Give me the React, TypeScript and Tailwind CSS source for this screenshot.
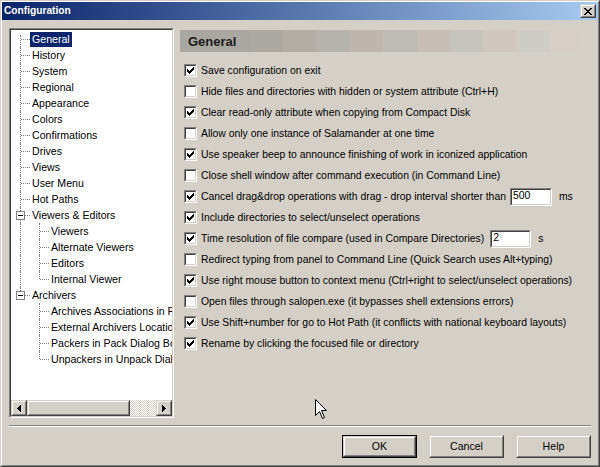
import React from "react";

type Node = {
  label: string;
  level: 0 | 1;
  selected?: boolean;
  first?: boolean;
  last?: boolean;
  expander?: boolean;
  parentLine?: boolean;
};

const TREE: Node[] = [
  { label: "General", level: 0, selected: true, first: true },
  { label: "History", level: 0 },
  { label: "System", level: 0 },
  { label: "Regional", level: 0 },
  { label: "Appearance", level: 0 },
  { label: "Colors", level: 0 },
  { label: "Confirmations", level: 0 },
  { label: "Drives", level: 0 },
  { label: "Views", level: 0 },
  { label: "User Menu", level: 0 },
  { label: "Hot Paths", level: 0 },
  { label: "Viewers & Editors", level: 0, expander: true },
  { label: "Viewers", level: 1, parentLine: true },
  { label: "Alternate Viewers", level: 1, parentLine: true },
  { label: "Editors", level: 1, parentLine: true },
  { label: "Internal Viewer", level: 1, parentLine: true, last: true },
  { label: "Archivers", level: 0, expander: true, last: true },
  { label: "Archives Associations in Panels", level: 1 },
  { label: "External Archivers Locations", level: 1 },
  { label: "Packers in Pack Dialog Box", level: 1 },
  { label: "Unpackers in Unpack Dialog Box", level: 1, last: true },
];

const OPTIONS: { label: string; checked: boolean; input?: string; unit?: string }[] = [
  { label: "Save configuration on exit", checked: true },
  { label: "Hide files and directories with hidden or system attribute (Ctrl+H)", checked: false },
  { label: "Clear read-only attribute when copying from Compact Disk", checked: true },
  { label: "Allow only one instance of Salamander at one time", checked: false },
  { label: "Use speaker beep to announce finishing of work in iconized application", checked: true },
  { label: "Close shell window after command execution (in Command Line)", checked: false },
  { label: "Cancel drag&drop operations with drag - drop interval shorter than", checked: true, input: "500", unit: "ms" },
  { label: "Include directories to select/unselect operations", checked: true },
  { label: "Time resolution of file compare (used in Compare Directories)", checked: true, input: "2", unit: "s" },
  { label: "Redirect typing from panel to Command Line (Quick Search uses Alt+typing)", checked: false },
  { label: "Use right mouse button to context menu (Ctrl+right to select/unselect operations)", checked: true },
  { label: "Open files through salopen.exe (it bypasses shell extensions errors)", checked: false },
  { label: "Use Shift+number for go to Hot Path (it conflicts with national keyboard layouts)", checked: true },
  { label: "Rename by clicking the focused file or directory", checked: true },
];

function CheckMark() {
  return (
    <svg width="7" height="7" viewBox="0 0 7 7" shapeRendering="crispEdges">
      <path
        d="M6 0h1v1h-1z M5 1h2v1h-2z M0 2h1v1h-1z M4 2h3v1h-3z M0 3h2v1h-2z M3 3h3v1h-3z M0 4h5v1h-5z M1 5h3v1h-3z M2 6h1v1h-1z"
        fill="#000"
      />
    </svg>
  );
}

function CheckBox({ checked }: { checked: boolean }) {
  return (
    <div className="w-[13px] h-[13px] shrink-0 border border-t-[#808080] border-l-[#808080] border-b-white border-r-white">
      <div className="w-full h-full border border-t-[#404040] border-l-[#404040] border-b-[#d4d0c8] border-r-[#d4d0c8] bg-white flex items-center justify-center">
        {checked && <CheckMark />}
      </div>
    </div>
  );
}

function Edit({ value, w }: { value: string; w: string }) {
  return (
    <div className={`${w} h-[18px] shrink-0 border border-t-[#808080] border-l-[#808080] border-b-white border-r-white`}>
      <div className="w-full h-full border border-t-[#404040] border-l-[#404040] border-b-[#d4d0c8] border-r-[#d4d0c8] bg-white flex items-center pl-[1px] leading-none">
        {value}
      </div>
    </div>
  );
}

function Raised({ className, children }: { className: string; children?: React.ReactNode }) {
  return (
    <div className={`${className} shrink-0 border border-t-[#d4d0c8] border-l-[#d4d0c8] border-b-[#404040] border-r-[#404040]`}>
      <div className="w-full h-full border border-t-white border-l-white border-b-[#808080] border-r-[#808080] bg-[#d4d0c8] flex items-center justify-center">
        {children}
      </div>
    </div>
  );
}

function TreeRow({ n }: { n: Node }) {
  return (
    <div className="relative h-[16px] flex items-center whitespace-nowrap">
      {n.level === 0 && (
        <div
          className={`absolute left-[9px] border-l border-dotted border-[#808080] ${n.first ? "top-[4px]" : "top-0"} ${
            n.last ? "h-[8px]" : "bottom-0"
          }`}
        />
      )}
      {n.level === 1 && n.parentLine && (
        <div className="absolute left-[9px] top-0 bottom-0 border-l border-dotted border-[#808080]" />
      )}
      {n.level === 0 && (
        <div className="absolute left-[10px] top-[8px] w-[9px] border-t border-dotted border-[#808080]" />
      )}
      {n.level === 1 && (
        <>
          <div className={`absolute left-[28px] top-0 border-l border-dotted border-[#808080] ${n.last ? "h-[8px]" : "bottom-0"}`} />
          <div className="absolute left-[29px] top-[8px] w-[9px] border-t border-dotted border-[#808080]" />
        </>
      )}
      {n.expander && (
        <div className="absolute left-[5px] top-[4px] w-[9px] h-[9px] border border-[#808080] bg-white flex items-center justify-center">
          <div className="w-[5px] h-[1px] bg-black" />
        </div>
      )}
      <span
        className={`${n.level === 0 ? "ml-[19px]" : "ml-[38px]"} h-[15px] leading-[15px] px-[2px] ${
          n.selected ? "bg-[#0a246a] text-white" : "text-black"
        }`}
      >
        {n.label}
      </span>
    </div>
  );
}

export default function App() {
  return (
    <div className="relative w-[600px] h-[467px] overflow-hidden bg-[#d4d0c8] text-[10.6px] text-black font-['Liberation_Sans',Arial,sans-serif] border border-t-[#d4d0c8] border-l-[#d4d0c8] border-r-[#404040] border-b-[#404040]">
      <div className="h-full flex flex-col border border-t-white border-l-white border-r-[#808080] border-b-[#808080]">
        {/* Title bar */}
        <div className="h-[18px] shrink-0 flex items-center justify-between pl-[2px] pr-[2px] bg-[linear-gradient(to_right,#0a246a,#a6caf0)]">
          <span className="text-white font-bold text-[10.2px] leading-none">Configuration</span>
          <Raised className="w-[16px] h-[14px]">
            <svg width="8" height="7" viewBox="0 0 8 7" shapeRendering="crispEdges">
              <path
                d="M0 0h2v1h-2z M6 0h2v1h-2z M1 1h2v1h-2z M5 1h2v1h-2z M2 2h4v1h-4z M3 3h2v1h-2z M2 4h4v1h-4z M1 5h2v1h-2z M5 5h2v1h-2z M0 6h2v1h-2z M6 6h2v1h-2z"
                fill="#000"
              />
            </svg>
          </Raised>
        </div>

        {/* Body */}
        <div className="flex-1 flex flex-col px-[7px]">
          <div className="flex items-start mt-[8px]">
            {/* Tree */}
            <div className="w-[165px] h-[390px] shrink-0 border border-t-[#808080] border-l-[#808080] border-b-white border-r-white">
              <div className="w-full h-full flex flex-col bg-white border border-t-[#404040] border-l-[#404040] border-b-[#d4d0c8] border-r-[#d4d0c8]">
                <div className="flex-1 overflow-hidden pt-[1px]">
                  {TREE.map((n) => (
                    <TreeRow key={n.label} n={n} />
                  ))}
                </div>
                <div className="h-[16px] flex shrink-0">
                  <Raised className="w-[16px] h-[16px]">
                    <svg width="4" height="7" viewBox="0 0 4 7" shapeRendering="crispEdges">
                      <path d="M3 0h1v7h-1z M2 1h1v5h-1z M1 2h1v3h-1z M0 3h1v1h-1z" fill="#000" />
                    </svg>
                  </Raised>
                  <Raised className="w-[103px] h-[16px]" />
                  <div className="flex-1 bg-[image:repeating-conic-gradient(#ffffff_0_25%,#d4d0c8_0_50%)] bg-[length:2px_2px]" />
                  <Raised className="w-[16px] h-[16px]">
                    <svg width="4" height="7" viewBox="0 0 4 7" shapeRendering="crispEdges">
                      <path d="M0 0h1v7h-1z M1 1h1v5h-1z M2 2h1v3h-1z M3 3h1v1h-1z" fill="#000" />
                    </svg>
                  </Raised>
                </div>
              </div>
            </div>

            {/* Right page */}
            <div className="ml-[6px] mt-[2px] w-[398px]">
              <div className="h-[22px] flex items-center pl-[8px] bg-[linear-gradient(to_right,#a9a7a1_0px,#a9a7a1_70px,#aca9a3_70px,#aca9a3_103px,#b3ada6_103px,#b3ada6_137px,#b5b3ae_137px,#b5b3ae_170px,#beb6ad_170px,#beb6ad_203px,#bdbbb6_203px,#bdbbb6_237px,#c7bfb5_237px,#c7bfb5_270px,#c5c4bf_270px,#c5c4bf_303px,#cfc7bd_303px,#cfc7bd_337px,#cdccc7_337px,#cdccc7_370px,#d6cec4_370px,#d6cec4_398px)]">
                <span className="font-bold text-[13px] text-[#1a1a1a] leading-none">General</span>
              </div>
              <div className="mt-[8px] text-[10.4px]">
                {OPTIONS.map((o) => (
                  <div key={o.label} className="h-[21px] flex items-center pl-[4px] whitespace-nowrap">
                    <CheckBox checked={o.checked} />
                    <span className="ml-[4px]">{o.label}</span>
                    {o.input && (
                      <>
                        <div className={o.unit === "ms" ? "ml-[4px]" : "ml-[6px]"}>
                          <Edit value={o.input} w={o.unit === "ms" ? "w-[42px]" : "w-[41px]"} />
                        </div>
                        <span className="ml-[7px]">{o.unit}</span>
                      </>
                    )}
                  </div>
                ))}
              </div>
            </div>
          </div>

          {/* Separator */}
          <div className="mt-[7px] h-[2px] border-t border-t-[#808080] border-b border-b-white" />

          {/* Buttons */}
          <div className="mt-[8px] flex justify-end gap-[12px]">
            <div className="w-[75px] h-[23px] border border-black">
              <Raised className="w-full h-full">OK</Raised>
            </div>
            <Raised className="w-[75px] h-[23px]">Cancel</Raised>
            <Raised className="w-[75px] h-[23px]">Help</Raised>
          </div>
        </div>
      </div>

      {/* Mouse pointer */}
      <svg className="absolute left-[314px] top-[398px]" width="13" height="21" viewBox="0 0 13 21">
        <path d="M0.5 0.5 L0.5 16.5 L4.5 12.5 L7.5 19.5 L9.5 18.5 L6.5 11.5 L11.5 11.5 Z" fill="#fff" stroke="#000" strokeWidth="1" />
      </svg>
    </div>
  );
}
